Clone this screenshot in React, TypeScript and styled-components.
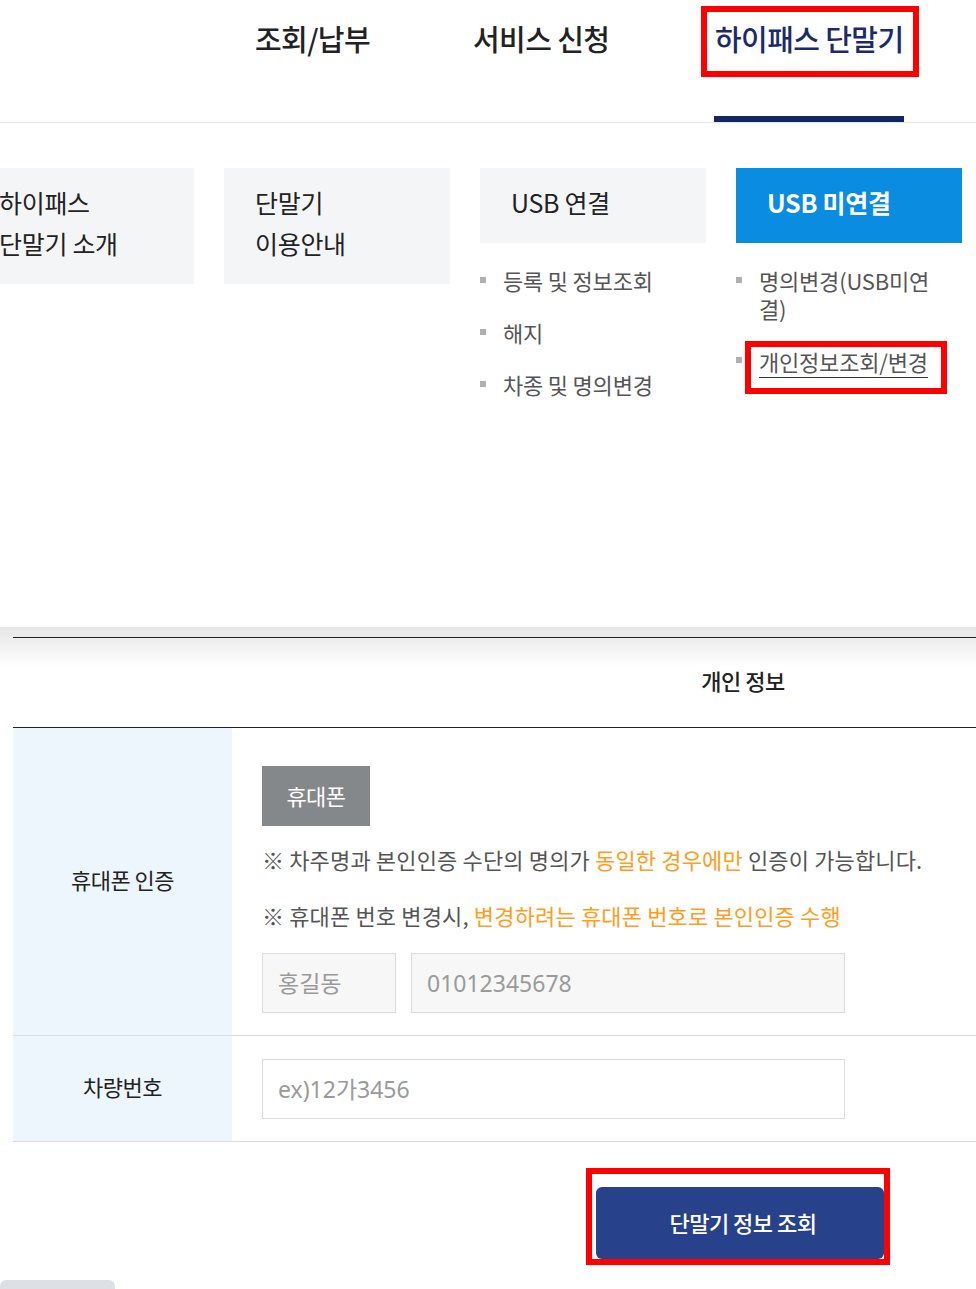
import React from 'react'
import styled, { createGlobalStyle } from 'styled-components'

const GlobalStyle = createGlobalStyle`
  html, body {
    margin: 0;
    padding: 0;
    background: #fff;
  }
  body {
    font-family: 'Noto Sans CJK KR', 'Noto Sans', sans-serif;
    color: #222;
  }
  * {
    box-sizing: border-box;
  }
`

const Page = styled.div`
  width: 976px;
  min-height: 1289px;
  overflow: hidden;
`

const Header = styled.header`
  display: flex;
  height: 123px;
  padding-left: 255px;
  border-bottom: 1px solid #e6e6e6;
`

const NavItem = styled.div<{ w?: number }>`
  display: flex;
  flex-direction: column;
  justify-content: space-between;
  width: ${({ w }) => (w ? `${w}px` : 'auto')};
  height: 122px;
`

const NavText = styled.span<{ active?: boolean }>`
  display: block;
  margin-top: ${({ active }) => (active ? '0' : '21px')};
  font-size: 29px;
  line-height: 34px;
  font-weight: 500;
  letter-spacing: -0.6px;
  white-space: nowrap;
  color: ${({ active }) => (active ? '#1a2a6c' : '#222')};
`

const RedBox = styled.div<{ pad: string }>`
  display: inline-block;
  border: 6px solid #ff0000;
  padding: ${({ pad }) => pad};
`

const NavBox = styled(RedBox)`
  margin-top: 6px;
`

const NavBar = styled.div`
  height: 6px;
  margin: 0 15px 0 13px;
  background: #132766;
`

const MenuArea = styled.section`
  display: grid;
  grid-template-columns: repeat(4, 226px);
  column-gap: 30px;
  margin-left: -32px;
  padding-top: 45px;
  height: 504px;
`

const Column = styled.div`
  display: flex;
  flex-direction: column;
`

const Card = styled.div<{ active?: boolean }>`
  padding: 14px 31px 20px;
  font-size: 25px;
  line-height: 41px;
  letter-spacing: -0.3px;
  background: ${({ active }) => (active ? '#0a8ce0' : '#f4f5f7')};
  color: ${({ active }) => (active ? '#fff' : '#222')};
  font-weight: ${({ active }) => (active ? 700 : 400)};
`

const SubList = styled.ul`
  list-style: none;
  margin: 23px 0 0;
  padding: 0;
  display: flex;
  flex-direction: column;
  gap: 24px;
`

const SubItem = styled.li`
  display: flex;
  align-items: flex-start;
  gap: 17px;
  font-size: 22px;
  line-height: 28px;
  letter-spacing: -0.2px;
  color: #555;
`

const SubText = styled.span`
  max-width: 180px;
`

const Bullet = styled.span`
  flex: none;
  width: 6px;
  height: 6px;
  margin-top: 11px;
  background: #b0b0b0;
`

const LinkBox = styled(RedBox)`
  margin: -5px 0 0 -14px;
`

const Underlined = styled.span`
  display: inline-block;
  border-bottom: 1px solid #333;
  padding-bottom: 2px;
  line-height: 28px;
`

const FormSection = styled.section`
  padding: 10px 0 0 13px;
  background: linear-gradient(#e6e6e6 0px, #ffffff 40px);
`

const Table = styled.div`
  width: 1460px;
  border-top: 1px solid #222;
`

const TitleRow = styled.div`
  display: flex;
  align-items: center;
  justify-content: center;
  height: 90px;
  padding-bottom: 6px;
  border-bottom: 1px solid #222;
  font-size: 22px;
  font-weight: 500;
  letter-spacing: -0.5px;
  color: #222;
`

const Row = styled.div`
  display: grid;
  grid-template-columns: 219px 1fr;
  border-bottom: 1px solid #dcdcdc;
`

const Label = styled.div`
  display: flex;
  align-items: center;
  justify-content: center;
  padding-bottom: 5px;
  background: #eef6fd;
  font-size: 22px;
  letter-spacing: -0.5px;
  color: #222;
`

const Cell = styled.div<{ pad: string }>`
  padding: ${({ pad }) => pad};
  display: flex;
  flex-direction: column;
  align-items: flex-start;
`

const TabButton = styled.button`
  width: 108px;
  height: 60px;
  padding: 0 0 3px;
  border: none;
  background: #85888b;
  color: #fff;
  font-family: inherit;
  font-size: 22px;
  letter-spacing: -0.5px;
`

const Notice = styled.p<{ first?: boolean }>`
  margin: ${({ first }) => (first ? '17px 0 0' : '24px 0 0')};
  font-size: 22px;
  line-height: 32px;
  letter-spacing: 0.15px;
  color: #555;
  white-space: nowrap;
`

const Accent = styled.span`
  color: #ff9d1c;
`

const InputRow = styled.div`
  display: flex;
  gap: 15px;
  margin-top: 22px;
`

const Field = styled.input<{ w: number; filled?: boolean }>`
  width: ${({ w }) => w}px;
  height: 60px;
  padding: 0 15px;
  border: 1px solid #dcdcdc;
  background: ${({ filled }) => (filled ? '#f7f7f7' : '#fff')};
  font-family: 'Noto Sans', 'Noto Sans CJK KR', sans-serif;
  font-size: 23px;
  color: #999;
  outline: none;

  &::placeholder {
    color: #9a9a9a;
  }
`

const Actions = styled.div`
  display: flex;
  padding: 26px 0 0 586px;
`

const SubmitButton = styled.button`
  width: 288px;
  height: 72px;
  padding: 0 0 2px 6px;
  border: none;
  border-radius: 6px;
  background: #27428a;
  color: #fff;
  font-family: inherit;
  font-size: 22px;
  font-weight: 500;
  letter-spacing: -0.5px;
`

const BottomTab = styled.div`
  width: 115px;
  height: 20px;
  margin-top: 15px;
  border-radius: 6px 6px 0 0;
  background: #dde1e6;
`

export default function App() {
  return (
    <Page>
      <GlobalStyle />
      <Header>
        <NavItem w={218}>
          <NavText>조회/납부</NavText>
        </NavItem>
        <NavItem w={228}>
          <NavText>서비스 신청</NavText>
        </NavItem>
        <NavItem>
          <NavBox pad="9px 9px 16px 8px">
            <NavText active>하이패스 단말기</NavText>
          </NavBox>
          <NavBar />
        </NavItem>
      </Header>

      <MenuArea>
        <Column>
          <Card>
            하이패스
            <br />
            단말기 소개
          </Card>
        </Column>
        <Column>
          <Card>
            단말기
            <br />
            이용안내
          </Card>
        </Column>
        <Column>
          <Card>USB 연결</Card>
          <SubList>
            <SubItem>
              <Bullet />
              <SubText>등록 및 정보조회</SubText>
            </SubItem>
            <SubItem>
              <Bullet />
              <SubText>해지</SubText>
            </SubItem>
            <SubItem>
              <Bullet />
              <SubText>차종 및 명의변경</SubText>
            </SubItem>
          </SubList>
        </Column>
        <Column>
          <Card active>USB 미연결</Card>
          <SubList>
            <SubItem>
              <Bullet />
              <SubText>명의변경(USB미연결)</SubText>
            </SubItem>
            <SubItem>
              <Bullet />
              <LinkBox pad="0 13px 10px 8px">
                <Underlined>개인정보조회/변경</Underlined>
              </LinkBox>
            </SubItem>
          </SubList>
        </Column>
      </MenuArea>

      <FormSection>
        <Table>
          <TitleRow>개인 정보</TitleRow>
          <Row>
            <Label>휴대폰 인증</Label>
            <Cell pad="38px 0 22px 30px">
              <TabButton>휴대폰</TabButton>
              <Notice first>
                ※ 차주명과 본인인증 수단의 명의가 <Accent>동일한 경우에만</Accent> 인증이
                가능합니다.
              </Notice>
              <Notice>
                ※ 휴대폰 번호 변경시, <Accent>변경하려는 휴대폰 번호로 본인인증 수행</Accent>
              </Notice>
              <InputRow>
                <Field w={134} filled placeholder="홍길동" readOnly />
                <Field w={434} filled placeholder="01012345678" readOnly />
              </InputRow>
            </Cell>
          </Row>
          <Row>
            <Label>차량번호</Label>
            <Cell pad="23px 0 22px 30px">
              <Field w={583} placeholder="ex)12가3456" />
            </Cell>
          </Row>
        </Table>
      </FormSection>

      <Actions>
        <RedBox pad="13px 0 0 4px">
          <SubmitButton>단말기 정보 조회</SubmitButton>
        </RedBox>
      </Actions>
      <BottomTab />
    </Page>
  )
}
